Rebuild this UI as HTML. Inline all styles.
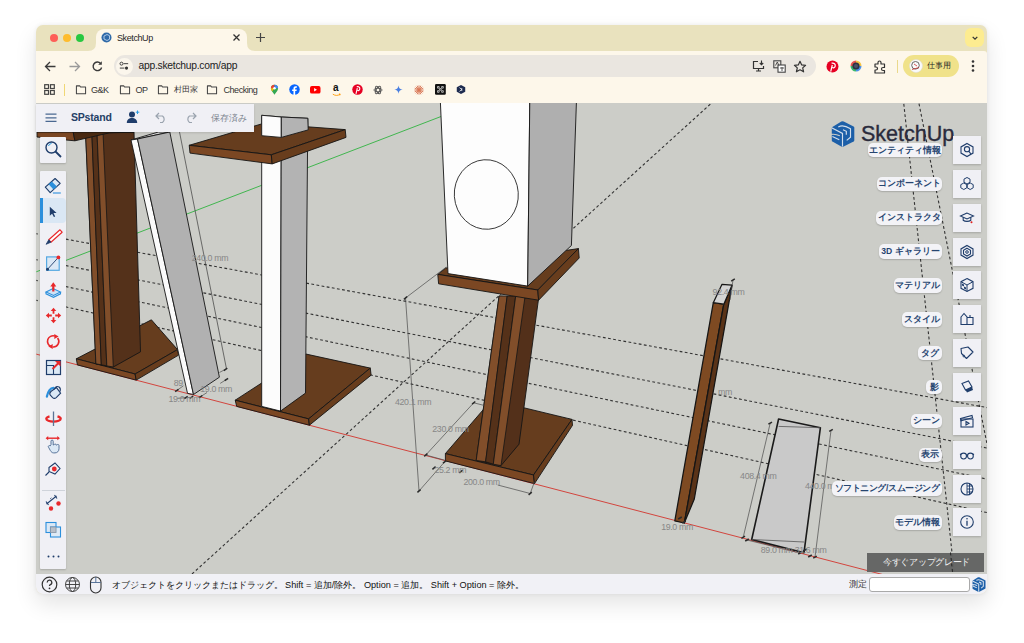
<!DOCTYPE html>
<html><head><meta charset="utf-8">
<style>
*{margin:0;padding:0;box-sizing:border-box}
html,body{width:1024px;height:643px;overflow:hidden;background:#fff;font-family:"Liberation Sans",sans-serif}
.a{position:absolute}
.t{position:absolute;white-space:nowrap;line-height:1}
#win{left:36.3px;top:25px;width:950.7px;height:569px;border-radius:7px;background:#e9e2be;box-shadow:0 10px 22px rgba(0,0,0,0.11),0 0 4px rgba(0,0,0,0.07)}
#tab{left:96px;top:29px;width:151px;height:23px;background:#fdf7ea;border-radius:8px 8px 0 0}
#toolbar{left:36.3px;top:51px;width:950.7px;height:52px;background:#fdf7ea;border-radius:0 3px 0 0}
#addr{left:114px;top:55px;width:702px;height:22px;background:#eae6e0;border-radius:11px}
#chip{left:903px;top:55px;width:56px;height:22px;background:#f0e28a;border-radius:11px}
#vp{left:36.3px;top:103px;width:950.7px;height:471px;background:#cccdc8;overflow:hidden}
#status{left:36.3px;top:574px;width:950.7px;height:20px;background:#f1f1f6;border-radius:0 0 7px 7px}
.dot{width:8px;height:8px;border-radius:50%;top:34px}
</style></head><body>
<div id="win" class="a"></div>
<!-- traffic lights -->
<div class="a dot" style="left:50px;background:#fe5f57"></div>
<div class="a dot" style="left:63px;background:#febc2e"></div>
<div class="a dot" style="left:76px;background:#28c840"></div>
<div id="tab" class="a"></div>
<!-- tab flares -->
<svg class="a" style="left:88px;top:43px" width="8" height="8"><path d="M0 8 Q8 8 8 0 L8 8Z" fill="#fdf7ea"/></svg>
<svg class="a" style="left:247px;top:43px" width="8" height="8"><path d="M8 8 Q0 8 0 0 L0 8Z" fill="#fdf7ea"/></svg>
<!-- favicon -->
<svg class="a" style="left:101px;top:32px" width="11" height="11" viewBox="0 0 11 11"><circle cx="5.5" cy="5.5" r="5" fill="#2f6aa8"/><path d="M3 4l3-1.5 2.5 1.2v3.5L6 8.5 3 7z" fill="none" stroke="#bcd3ec" stroke-width="0.9"/></svg>
<div class="t" style="left:117px;top:33.5px;font-size:9px;letter-spacing:-0.4px;color:#262626">SketchUp</div>
<svg class="a" style="left:232px;top:33px" width="9" height="9" viewBox="0 0 9 9"><path d="M1.5 1.5l6 6M7.5 1.5l-6 6" stroke="#333" stroke-width="1.3"/></svg>
<svg class="a" style="left:255px;top:32px" width="11" height="11" viewBox="0 0 11 11"><path d="M5.5 1v9M1 5.5h9" stroke="#444" stroke-width="1.2"/></svg>
<!-- dropdown -->
<div class="a" style="left:965px;top:28px;width:19px;height:19px;background:#fdec90;border-radius:6px"></div>
<svg class="a" style="left:970.5px;top:34.5px" width="8" height="6" viewBox="0 0 9 7"><path d="M1.8 2.2l2.7 2.7 2.7-2.7" fill="none" stroke="#333" stroke-width="1.5"/></svg>
<div id="toolbar" class="a"></div>
<!-- nav -->
<svg class="a" style="left:44px;top:60px" width="13" height="13" viewBox="0 0 13 13"><path d="M11.5 6.5h-10M6 2L1.5 6.5 6 11" fill="none" stroke="#3a3a3a" stroke-width="1.3"/></svg>
<svg class="a" style="left:67.5px;top:60px" width="13" height="13" viewBox="0 0 13 13"><path d="M1.5 6.5h10M7 2l4.5 4.5L7 11" fill="none" stroke="#9a9a9a" stroke-width="1.3"/></svg>
<svg class="a" style="left:91px;top:60px" width="13" height="13" viewBox="0 0 13 13"><path d="M10.6 7.5A4.3 4.3 0 1 1 9.6 3.4" fill="none" stroke="#3a3a3a" stroke-width="1.4"/><path d="M10.8 1.2v3.6H7.2z" fill="#3a3a3a"/></svg>
<div id="addr" class="a"></div>
<div class="a" style="left:115.8px;top:57.5px;width:17px;height:17px;border-radius:8.5px;background:#fbf6ec"></div>
<svg class="a" style="left:119.3px;top:61px" width="10" height="10" viewBox="0 0 12 12"><circle cx="3" cy="3.2" r="1.8" fill="none" stroke="#333" stroke-width="1.1"/><path d="M5.5 3.2h5.5M1 8.5h5.5" stroke="#333" stroke-width="1.1"/><circle cx="9" cy="8.5" r="1.9" fill="#333"/></svg>
<div class="t" style="left:138.5px;top:61px;font-size:10.3px;letter-spacing:-0.25px;color:#222">app.sketchup.com/app</div>
<!-- address right icons -->
<svg class="a" style="left:752px;top:60px" width="13" height="12" viewBox="0 0 13 12"><path d="M6 1.5H1.5v7h10V6" fill="none" stroke="#333" stroke-width="1.2"/><path d="M4 11h5M6.5 8.5V11" stroke="#333" stroke-width="1.2"/><path d="M9.5 0.5v4M7.8 3l1.7 1.8L11.2 3" fill="none" stroke="#333" stroke-width="1.1"/></svg>
<svg class="a" style="left:773px;top:60px" width="13" height="13" viewBox="0 0 13 13"><rect x="0.8" y="0.8" width="7" height="7" fill="none" stroke="#444" stroke-width="1.1"/><rect x="5" y="5" width="7.2" height="7.2" fill="#fff" stroke="#444" stroke-width="1.1"/><path d="M2.5 5.5l1.8-3.5 1.6 3.5M7 8h4M9 7v4" fill="none" stroke="#444" stroke-width="0.9"/></svg>
<svg class="a" style="left:793px;top:59.5px" width="14" height="14" viewBox="0 0 14 14"><path d="M7 1.3l1.7 3.6 3.9.4-2.9 2.6.9 3.9L7 9.8l-3.6 2 .9-3.9L1.4 5.3l3.9-.4z" fill="none" stroke="#333" stroke-width="1.2" stroke-linejoin="round"/></svg>
<!-- extensions -->
<svg class="a" style="left:826px;top:60px" width="13" height="13" viewBox="0 0 13 13"><circle cx="6.5" cy="6.5" r="6" fill="#e60023"/><path d="M5.6 3.2c2.6-.6 4 1 3.6 2.9-.3 1.6-2 2.1-2.7 1.3M6.3 5l-1.6 6.6" fill="none" stroke="#fff" stroke-width="1.2"/></svg>
<svg class="a" style="left:850px;top:60px" width="12" height="12" viewBox="0 0 12 12"><path d="M6 0.5A5.5 5.5 0 0 1 11.5 6H6z" fill="#f6c343"/><path d="M11.5 6A5.5 5.5 0 0 1 6 11.5V6z" fill="#4a8fe7"/><path d="M6 11.5A5.5 5.5 0 0 1 0.5 6H6z" fill="#3bb86b"/><path d="M0.5 6A5.5 5.5 0 0 1 6 0.5V6z" fill="#e8554e"/><circle cx="6" cy="6" r="3.6" fill="#2d3142"/><circle cx="6" cy="6" r="2" fill="#4b5066"/></svg>
<svg class="a" style="left:873px;top:59.5px" width="14" height="14" viewBox="0 0 14 14"><path d="M2 4h3V2.5a1.5 1.5 0 0 1 3 0V4h3.5v3.5H10a1.5 1.5 0 0 0 0 3h1.5V13H2v-3h1a1.5 1.5 0 0 0 0-3H2z" fill="none" stroke="#333" stroke-width="1.2" stroke-linejoin="round"/></svg>
<div class="a" style="left:896.5px;top:60px;width:1.5px;height:13px;background:#ead98c"></div>
<div id="chip" class="a"></div>
<svg class="a" style="left:909px;top:59px" width="14" height="14" viewBox="0 0 14 14"><circle cx="7" cy="7" r="6.5" fill="#fafafa" stroke="#ddd" stroke-width="0.5"/><circle cx="6.5" cy="6.3" r="3.8" fill="none" stroke="#666" stroke-width="1"/><path d="M3 10.5l7-2M5 5l3 2" stroke="#c33" stroke-width="0.8"/></svg>
<div class="t" style="left:927px;top:61.5px;font-size:8px;color:#222">仕事用</div>
<svg class="a" style="left:970px;top:59px" width="6" height="14" viewBox="0 0 6 14"><circle cx="3" cy="2.5" r="1.3" fill="#333"/><circle cx="3" cy="7" r="1.3" fill="#333"/><circle cx="3" cy="11.5" r="1.3" fill="#333"/></svg>
<!-- bookmarks -->
<svg class="a" style="left:44px;top:84px" width="11" height="11" viewBox="0 0 11 11"><g fill="none" stroke="#444" stroke-width="1.2"><rect x="0.7" y="0.7" width="3.8" height="3.8"/><rect x="6.5" y="0.7" width="3.8" height="3.8"/><rect x="0.7" y="6.5" width="3.8" height="3.8"/><rect x="6.5" y="6.5" width="3.8" height="3.8"/></g></svg>
<div class="a" style="left:63.5px;top:84px;width:1.5px;height:12px;background:#f0d774"></div>
<svg class="a" style="left:75px;top:85px" width="12" height="9.5" viewBox="0 0 12 11"><path d="M0.7 1h3.8l1 1.3h5.8v7.8H0.7z" fill="none" stroke="#444" stroke-width="1.2" stroke-linejoin="round"/></svg>
<div class="t" style="left:91px;top:86px;font-size:9px;letter-spacing:-0.5px;color:#333">G&amp;K</div>
<svg class="a" style="left:119px;top:85px" width="12" height="9.5" viewBox="0 0 12 11"><path d="M0.7 1h3.8l1 1.3h5.8v7.8H0.7z" fill="none" stroke="#444" stroke-width="1.2" stroke-linejoin="round"/></svg>
<div class="t" style="left:135.5px;top:86px;font-size:9px;letter-spacing:-0.6px;color:#333">OP</div>
<svg class="a" style="left:157px;top:85px" width="12" height="9.5" viewBox="0 0 12 11"><path d="M0.7 1h3.8l1 1.3h5.8v7.8H0.7z" fill="none" stroke="#444" stroke-width="1.2" stroke-linejoin="round"/></svg>
<div class="t" style="left:174px;top:86px;font-size:7.5px;color:#333">村田家</div>
<svg class="a" style="left:206px;top:85px" width="12" height="9.5" viewBox="0 0 12 11"><path d="M0.7 1h3.8l1 1.3h5.8v7.8H0.7z" fill="none" stroke="#444" stroke-width="1.2" stroke-linejoin="round"/></svg>
<div class="t" style="left:223.5px;top:86px;font-size:9px;letter-spacing:-0.45px;color:#333">Checking</div>
<!-- bookmark icons -->
<svg class="a" style="left:269.5px;top:84px" width="9" height="11.5" viewBox="0 0 12 14"><path d="M6 13.5C4 10.5 1.2 8 1.2 5a4.8 4.8 0 0 1 9.6 0c0 3-2.8 5.5-4.8 8.5z" fill="#34a853"/><path d="M1.2 5a4.8 4.8 0 0 1 4.8-4.8V5z" fill="#ea4335"/><path d="M6 0.2A4.8 4.8 0 0 1 10.8 5H6z" fill="#4285f4"/><path d="M1.2 5H6l-3 4C2 7.8 1.2 6.5 1.2 5z" fill="#fbbc04"/><circle cx="6" cy="5" r="1.7" fill="#fff"/></svg>
<svg class="a" style="left:289.3px;top:84.3px" width="11" height="11" viewBox="0 0 13 13"><circle cx="6.5" cy="6.5" r="6.2" fill="#0866ff"/><path d="M7.3 13V8.3h1.6l.3-1.9H7.3V5.3c0-.6.3-1 1-1h1V2.7c-.4 0-1-.1-1.5-.1-1.5 0-2.5.9-2.5 2.5v1.3H3.7v1.9h1.6V13" fill="#fff"/></svg>
<svg class="a" style="left:310.2px;top:86px" width="10.5" height="7.5" viewBox="0 0 14 10"><rect x="0" y="0" width="14" height="10" rx="2.5" fill="#ff0000"/><path d="M5.5 2.8v4.4L9.3 5z" fill="#fff"/></svg>
<div class="t" style="left:333px;top:82.5px;font-size:10px;font-weight:bold;color:#111">a</div>
<svg class="a" style="left:332px;top:92.5px" width="9" height="4" viewBox="0 0 11 4"><path d="M1 1c3 2 6 2 9 0M8.5 0.5l1.5.5-.5 1.5" fill="none" stroke="#f90" stroke-width="1.1"/></svg>
<svg class="a" style="left:351.5px;top:84.3px" width="11" height="11" viewBox="0 0 13 13"><circle cx="6.5" cy="6.5" r="6.2" fill="#e60023"/><path d="M5.6 3.2c2.6-.6 4 1 3.6 2.9-.3 1.6-2 2.1-2.7 1.3M6.3 5l-1.6 6.6" fill="none" stroke="#fff" stroke-width="1.3"/></svg>
<svg class="a" style="left:373px;top:84.8px" width="10" height="10" viewBox="0 0 12 12"><g fill="none" stroke="#555" stroke-width="1.1"><ellipse cx="6" cy="6" rx="5" ry="2.2"/><ellipse cx="6" cy="6" rx="5" ry="2.2" transform="rotate(60 6 6)"/><ellipse cx="6" cy="6" rx="5" ry="2.2" transform="rotate(120 6 6)"/></g></svg>
<svg class="a" style="left:394.1px;top:85.3px" width="9" height="9" viewBox="0 0 12 12"><path d="M6 0.5C6.5 4 8 5.5 11.5 6 8 6.5 6.5 8 6 11.5 5.5 8 4 6.5 0.5 6 4 5.5 5.5 4 6 0.5z" fill="#4a7fe0"/></svg>
<svg class="a" style="left:414.4px;top:84.8px" width="10" height="10" viewBox="0 0 13 13"><g stroke="#d97757" stroke-width="1.2" stroke-linecap="round"><path d="M6.5 1v11M1 6.5h11M2.6 2.6l7.8 7.8M10.4 2.6l-7.8 7.8M4.3 1.4l4.4 10.2M8.7 1.4L4.3 11.6M1.4 4.3l10.2 4.4M11.6 4.3L1.4 8.7"/></g></svg>
<svg class="a" style="left:435px;top:84.4px" width="10.8" height="10.8" viewBox="0 0 13 13"><rect width="13" height="13" rx="1.5" fill="#111"/><g fill="none" stroke="#ddd" stroke-width="0.9"><path d="M3 3h2v2H3zM8 3h2v2H8zM3 8h2v2H3zM8 8h2v2H8zM5.5 5.5h2v2h-2z"/></g></svg>
<svg class="a" style="left:456.3px;top:84.3px" width="10" height="11" viewBox="0 0 13 13"><path d="M6.5 0.5l5.5 3v6l-5.5 3-5.5-3v-6z" fill="#1d2b4f"/><path d="M4.5 4l3 2.5-3 2.5M7.5 4.5v4" fill="none" stroke="#fff" stroke-width="1"/></svg>
<div id="vp" class="a"></div>
<div id="status" class="a"></div>

<!-- SCENE -->
<svg id="scene" class="a" style="left:0;top:0" width="1024" height="643" viewBox="0 0 1024 643">
<defs><clipPath id="vpc"><rect x="36.3" y="103" width="950.7" height="471"/></clipPath></defs>
<g clip-path="url(#vpc)">
<rect x="36" y="103" width="951" height="471" fill="#cccdc8"/>
<line x1="30.0" y1="232.6" x2="987.0" y2="407.6" stroke="#333" stroke-width="1.10" stroke-dasharray="2.8 2.4"/>
<line x1="30.0" y1="258.5" x2="987.0" y2="448.0" stroke="#333" stroke-width="1.10" stroke-dasharray="2.8 2.4"/>
<line x1="30.0" y1="279.1" x2="987.0" y2="479.1" stroke="#333" stroke-width="1.10" stroke-dasharray="2.8 2.4"/>
<line x1="30.0" y1="298.9" x2="987.0" y2="512.6" stroke="#333" stroke-width="1.10" stroke-dasharray="2.8 2.4"/>
<line x1="192.0" y1="574.0" x2="710.6" y2="103.9" stroke="#333" stroke-width="1.10" stroke-dasharray="2.8 2.4"/>
<line x1="903.8" y1="103.9" x2="954.3" y2="574.0" stroke="#333" stroke-width="1.10" stroke-dasharray="2.8 2.4"/>
<line x1="919.0" y1="103.7" x2="1013.0" y2="574.0" stroke="#333" stroke-width="1.10" stroke-dasharray="2.8 2.4"/>
<line x1="30.0" y1="352.5" x2="987.0" y2="601.7" stroke="#d2453e" stroke-width="1.00" />
<line x1="30.0" y1="274.2" x2="441.0" y2="116.5" stroke="#41b64f" stroke-width="1.00" />
<polygon points="76.3,358.8 151.4,319.8 177.5,349.6 135.1,374.0" fill="#663d1e" stroke="#151515" stroke-width="0.90" stroke-linejoin="round" />
<polygon points="76.3,358.8 135.1,374.0 136.2,380.1 77.4,364.9" fill="#7b4723" stroke="#151515" stroke-width="0.90" stroke-linejoin="round" />
<polygon points="135.1,374.0 177.5,349.6 178.6,355.1 136.2,380.1" fill="#683d1d" stroke="#151515" stroke-width="0.90" stroke-linejoin="round" />
<polygon points="85.5,132.0 134.0,132.0 140.5,351.8 113.3,367.0 95.9,363.8" fill="#54311a" stroke="#151515" stroke-width="0.90" stroke-linejoin="round" />
<polygon points="85.5,132.0 91.8,132.0 101.3,364.8 95.9,363.8" fill="#814e2a" stroke="#151515" stroke-width="0.80" stroke-linejoin="round" />
<polygon points="91.8,132.0 97.0,132.0 106.8,365.9 101.3,364.8" fill="#553119" stroke="#151515" stroke-width="0.80" stroke-linejoin="round" />
<polygon points="97.0,132.0 103.0,132.0 113.3,367.0 106.8,365.9" fill="#814e2a" stroke="#151515" stroke-width="0.80" stroke-linejoin="round" />
<polygon points="37.0,132.0 73.2,132.0 74.9,140.8 66.2,140.0 37.0,137.0" fill="#7b4723" stroke="#151515" stroke-width="0.90" stroke-linejoin="round" />
<polygon points="73.2,132.0 134.0,132.0 109.2,132.9 74.9,140.8" fill="#4a2a12" stroke="#151515" stroke-width="0.90" stroke-linejoin="round" />
<polygon points="131.0,140.0 158.4,132.0 169.8,132.0 137.5,139.0" fill="#d9d9d9" stroke="#151515" stroke-width="0.90" stroke-linejoin="round" />
<polygon points="131.0,140.0 137.5,139.0 193.5,394.5 187.5,393.3" fill="#fbfbfb" stroke="#151515" stroke-width="0.90" stroke-linejoin="round" />
<polygon points="137.5,139.0 169.8,132.0 219.4,377.2 193.5,394.5" fill="#b1b1b1" stroke="#151515" stroke-width="0.90" stroke-linejoin="round" />
<line x1="179.5" y1="132.0" x2="226.5" y2="369.0" stroke="#3c3c3c" stroke-width="0.70" />
<polygon points="235.2,400.2 306.2,354.1 370.3,368.1 308.6,418.9" fill="#663d1e" stroke="#151515" stroke-width="0.90" stroke-linejoin="round" />
<polygon points="235.2,400.2 308.6,418.9 309.4,425.2 236.7,406.4" fill="#7b4723" stroke="#151515" stroke-width="0.90" stroke-linejoin="round" />
<polygon points="308.6,418.9 370.3,368.1 371.1,375.2 309.4,425.2" fill="#683d1d" stroke="#151515" stroke-width="0.90" stroke-linejoin="round" />
<polygon points="261.7,115.3 281.3,117.0 280.5,411.1 261.7,406.4" fill="#fcfcfc" stroke="#151515" stroke-width="0.90" stroke-linejoin="round" />
<polygon points="281.3,117.0 307.8,118.3 305.5,393.1 280.5,411.1" fill="#b3b3b3" stroke="#151515" stroke-width="0.90" stroke-linejoin="round" />
<polygon points="189.2,145.3 263.0,123.5 345.2,129.6 271.3,154.8" fill="#663d1e" stroke="#151515" stroke-width="0.90" stroke-linejoin="round" />
<polygon points="189.2,145.3 271.3,154.8 272.2,163.9 190.0,153.1" fill="#7b4723" stroke="#151515" stroke-width="0.90" stroke-linejoin="round" />
<polygon points="271.3,154.8 345.2,129.6 346.0,137.4 272.2,163.9" fill="#683d1d" stroke="#151515" stroke-width="0.90" stroke-linejoin="round" />
<polygon points="261.7,115.3 281.3,117.0 281.3,137.4 261.7,135.7" fill="#fcfcfc" stroke="#151515" stroke-width="0.90" stroke-linejoin="round" />
<polygon points="281.3,117.0 307.8,118.3 308.2,129.9 281.3,137.4" fill="#b3b3b3" stroke="#151515" stroke-width="0.90" stroke-linejoin="round" />
<polygon points="445.4,453.6 491.6,400.0 572.0,419.4 533.5,475.0" fill="#663d1e" stroke="#151515" stroke-width="0.90" stroke-linejoin="round" />
<polygon points="445.4,453.6 533.5,475.0 534.5,483.6 445.4,460.9" fill="#7b4723" stroke="#151515" stroke-width="0.90" stroke-linejoin="round" />
<polygon points="533.5,475.0 572.0,419.4 572.5,425.3 534.5,483.6" fill="#683d1d" stroke="#151515" stroke-width="0.90" stroke-linejoin="round" />
<polygon points="499.1,296.0 538.5,299.0 519.0,444.2 501.0,465.6 476.2,460.4" fill="#53301a" stroke="#151515" stroke-width="0.90" stroke-linejoin="round" />
<polygon points="499.1,296.0 507.2,296.0 485.6,461.8 476.2,460.4" fill="#814e2a" stroke="#151515" stroke-width="0.80" stroke-linejoin="round" />
<polygon points="507.2,296.0 515.7,296.0 493.3,464.2 485.6,461.8" fill="#553119" stroke="#151515" stroke-width="0.80" stroke-linejoin="round" />
<polygon points="515.7,296.0 525.1,296.0 501.0,465.6 493.3,464.2" fill="#814e2a" stroke="#151515" stroke-width="0.80" stroke-linejoin="round" />
<polygon points="437.8,274.4 445.6,268.1 578.4,248.6 537.8,290.0" fill="#663d1e" stroke="#151515" stroke-width="0.90" stroke-linejoin="round" />
<polygon points="437.8,274.4 537.8,290.0 538.6,300.2 438.6,283.8" fill="#7b4723" stroke="#151515" stroke-width="0.90" stroke-linejoin="round" />
<polygon points="537.8,290.0 578.4,248.6 579.2,258.0 538.6,300.2" fill="#683d1d" stroke="#151515" stroke-width="0.90" stroke-linejoin="round" />
<polygon points="440.3,100.0 529.8,100.0 527.7,286.1 448.0,273.6" fill="#fdfdfd" stroke="#151515" stroke-width="0.90" stroke-linejoin="round" />
<polygon points="529.8,100.0 576.5,100.0 571.4,245.5 527.7,286.1" fill="#afafaf" stroke="#151515" stroke-width="0.90" stroke-linejoin="round" />
<ellipse cx="486.3" cy="194.5" rx="32" ry="34.8" fill="none" stroke="#2a2a2a" stroke-width="0.9" transform="rotate(-4 486.3 194.5)"/>
<polygon points="713.3,302.7 723.8,304.2 684.3,523.0 674.8,520.9" fill="#7e4a22" stroke="#151515" stroke-width="1.25" stroke-linejoin="round" />
<polygon points="723.8,304.2 732.0,285.2 694.3,499.0 684.3,523.0" fill="#5a3318" stroke="#151515" stroke-width="1.25" stroke-linejoin="round" />
<polygon points="713.3,302.7 721.9,284.4 732.0,285.2 723.8,304.2" fill="#d4d4d4" stroke="#151515" stroke-width="1.25" stroke-linejoin="round" />
<polygon points="778.6,419.0 820.4,427.7 804.0,552.7 751.7,539.5" fill="#c9c9c9" stroke="#1a1a1a" stroke-width="1.60" stroke-linejoin="round" />
<line x1="778.6" y1="426.4" x2="820.4" y2="427.7" stroke="#555" stroke-width="0.80" />
<line x1="751.7" y1="539.5" x2="804.0" y2="542.0" stroke="#555" stroke-width="0.80" />
<line x1="405.5" y1="298.0" x2="419.0" y2="491.0" stroke="#4a4a4a" stroke-width="0.70" />
<line x1="405.5" y1="298.0" x2="446.4" y2="267.0" stroke="#4a4a4a" stroke-width="0.70" />
<line x1="473.7" y1="402.8" x2="425.8" y2="455.0" stroke="#4a4a4a" stroke-width="0.70" />
<line x1="473.7" y1="402.8" x2="484.0" y2="405.4" stroke="#4a4a4a" stroke-width="0.70" />
<line x1="425.8" y1="455.0" x2="444.6" y2="460.2" stroke="#4a4a4a" stroke-width="0.70" />
<line x1="419.0" y1="491.0" x2="444.6" y2="461.9" stroke="#4a4a4a" stroke-width="0.70" />
<line x1="497.7" y1="485.0" x2="530.2" y2="493.5" stroke="#4a4a4a" stroke-width="0.70" />
<line x1="530.2" y1="493.5" x2="534.4" y2="482.0" stroke="#4a4a4a" stroke-width="0.70" />
<line x1="770.2" y1="423.2" x2="743.2" y2="537.3" stroke="#4a4a4a" stroke-width="0.70" />
<line x1="831.0" y1="430.4" x2="815.0" y2="557.2" stroke="#4a4a4a" stroke-width="0.70" />
<line x1="747.0" y1="540.0" x2="800.0" y2="553.0" stroke="#4a4a4a" stroke-width="0.70" />
<line x1="733.0" y1="280.0" x2="730.0" y2="300.0" stroke="#4a4a4a" stroke-width="0.70" />
<line x1="176.8" y1="390.5" x2="183.4" y2="385.8" stroke="#4a4a4a" stroke-width="0.70" />
<line x1="219.4" y1="372.5" x2="226.4" y2="368.8" stroke="#4a4a4a" stroke-width="0.70" />
<line x1="220.2" y1="383.4" x2="226.4" y2="379.5" stroke="#4a4a4a" stroke-width="0.70" />
<line x1="177.2" y1="398.3" x2="192.0" y2="397.3" stroke="#4a4a4a" stroke-width="0.70" />
<line x1="200.6" y1="396.7" x2="207.0" y2="392.5" stroke="#4a4a4a" stroke-width="0.70" />
<line x1="175.1" y1="391.7" x2="178.5" y2="389.3" stroke="#2a2a2a" stroke-width="1.50" />
<line x1="198.9" y1="397.9" x2="202.3" y2="395.5" stroke="#2a2a2a" stroke-width="1.50" />
<line x1="223.9" y1="370.6" x2="227.3" y2="368.2" stroke="#2a2a2a" stroke-width="1.50" />
<line x1="224.7" y1="380.7" x2="228.1" y2="378.3" stroke="#2a2a2a" stroke-width="1.50" />
<line x1="184.3" y1="398.7" x2="187.7" y2="396.3" stroke="#2a2a2a" stroke-width="1.50" />
<line x1="189.8" y1="398.5" x2="193.2" y2="396.1" stroke="#2a2a2a" stroke-width="1.50" />
<line x1="403.9" y1="299.3" x2="407.1" y2="296.7" stroke="#2a2a2a" stroke-width="1.50" />
<line x1="472.1" y1="404.1" x2="475.3" y2="401.5" stroke="#2a2a2a" stroke-width="1.50" />
<line x1="424.2" y1="456.3" x2="427.4" y2="453.7" stroke="#2a2a2a" stroke-width="1.50" />
<line x1="417.4" y1="492.3" x2="420.6" y2="489.7" stroke="#2a2a2a" stroke-width="1.50" />
<line x1="443.0" y1="463.2" x2="446.2" y2="460.6" stroke="#2a2a2a" stroke-width="1.50" />
<line x1="528.6" y1="494.8" x2="531.8" y2="492.2" stroke="#2a2a2a" stroke-width="1.50" />
<line x1="432.4" y1="469.3" x2="435.6" y2="466.7" stroke="#2a2a2a" stroke-width="1.50" />
<line x1="459.4" y1="472.8" x2="462.6" y2="470.2" stroke="#2a2a2a" stroke-width="1.50" />
<line x1="768.4" y1="424.2" x2="772.0" y2="422.1" stroke="#2a2a2a" stroke-width="1.50" />
<line x1="741.4" y1="538.3" x2="745.0" y2="536.2" stroke="#2a2a2a" stroke-width="1.50" />
<line x1="829.2" y1="431.4" x2="832.8" y2="429.3" stroke="#2a2a2a" stroke-width="1.50" />
<line x1="813.2" y1="558.2" x2="816.8" y2="556.2" stroke="#2a2a2a" stroke-width="1.50" />
<line x1="745.2" y1="541.0" x2="748.8" y2="539.0" stroke="#2a2a2a" stroke-width="1.50" />
<line x1="798.2" y1="554.0" x2="801.8" y2="552.0" stroke="#2a2a2a" stroke-width="1.50" />
<line x1="803.2" y1="551.0" x2="806.8" y2="549.0" stroke="#2a2a2a" stroke-width="1.50" />
<line x1="808.2" y1="557.0" x2="811.8" y2="555.0" stroke="#2a2a2a" stroke-width="1.50" />
<line x1="731.2" y1="281.1" x2="734.8" y2="278.9" stroke="#2a2a2a" stroke-width="1.50" />
<line x1="678.2" y1="519.0" x2="681.8" y2="517.0" stroke="#2a2a2a" stroke-width="1.50" />
<line x1="682.2" y1="523.0" x2="685.8" y2="521.0" stroke="#2a2a2a" stroke-width="1.50" />
<text x="191.8" y="261.0" font-family="Liberation Sans, sans-serif" font-size="8.8" fill="#878787" letter-spacing="-0.35">240.0 mm</text>
<text x="173.8" y="386.0" font-family="Liberation Sans, sans-serif" font-size="8.8" fill="#878787" letter-spacing="-0.35">89</text>
<text x="168.5" y="401.7" font-family="Liberation Sans, sans-serif" font-size="8.8" fill="#878787" letter-spacing="-0.35">19.0 mm</text>
<text x="200.3" y="392.0" font-family="Liberation Sans, sans-serif" font-size="8.8" fill="#878787" letter-spacing="-0.35">19.0 mm</text>
<text x="395.0" y="405.0" font-family="Liberation Sans, sans-serif" font-size="8.8" fill="#878787" letter-spacing="-0.35">420.1 mm</text>
<text x="432.3" y="432.0" font-family="Liberation Sans, sans-serif" font-size="8.8" fill="#878787" letter-spacing="-0.35">230.0 mm</text>
<text x="434.4" y="472.6" font-family="Liberation Sans, sans-serif" font-size="8.8" fill="#878787" letter-spacing="-0.35">25.2 mm</text>
<text x="463.5" y="485.4" font-family="Liberation Sans, sans-serif" font-size="8.8" fill="#878787" letter-spacing="-0.35">200.0 mm</text>
<text x="712.6" y="295.2" font-family="Liberation Sans, sans-serif" font-size="8.8" fill="#878787" letter-spacing="-0.35">92.4 mm</text>
<text x="718.0" y="395.4" font-family="Liberation Sans, sans-serif" font-size="8.8" fill="#878787" letter-spacing="-0.35">mm</text>
<text x="661.2" y="530.1" font-family="Liberation Sans, sans-serif" font-size="8.8" fill="#878787" letter-spacing="-0.35">19.0 mm</text>
<text x="740.1" y="479.0" font-family="Liberation Sans, sans-serif" font-size="8.8" fill="#878787" letter-spacing="-0.35">408.4 mm</text>
<text x="805.0" y="489.4" font-family="Liberation Sans, sans-serif" font-size="8.8" fill="#878787" letter-spacing="-0.35">440.0 mm</text>
<text x="760.8" y="552.9" font-family="Liberation Sans, sans-serif" font-size="8.8" fill="#878787" letter-spacing="-0.35">89.0 mm 31.6 mm</text>
</g>
</svg>
<!-- header panel -->
<div class="a" style="left:36.3px;top:103.5px;width:217.7px;height:28px;background:#f0f0f5;box-shadow:0 1px 2px rgba(0,0,0,0.12)"></div>
<svg class="a" style="left:45px;top:113px" width="12" height="10" viewBox="0 0 12 10"><path d="M0.5 1.2h11M0.5 4.8h11M0.5 8.4h11" stroke="#4a6891" stroke-width="1.2"/></svg>
<div class="t" style="left:71px;top:112px;font-size:10.5px;font-weight:bold;color:#253f66;letter-spacing:-0.2px">SPstand</div>
<svg class="a" style="left:126px;top:110px" width="14" height="14" viewBox="0 0 14 14"><circle cx="6" cy="4.5" r="3" fill="#1f3d6b"/><path d="M0.8 13c0-3.2 2.2-5 5.2-5s5.2 1.8 5.2 5z" fill="#1f3d6b"/><path d="M11.5 0.5v3.5M9.8 2.2h3.5" stroke="#2a9be0" stroke-width="1"/></svg>
<svg class="a" style="left:155px;top:112px" width="13" height="11" viewBox="0 0 13 11"><path d="M4 1L1 4l3 3M1 4h6.5a4 4 0 0 1 0 6.5H5" fill="none" stroke="#9aa3ae" stroke-width="1.2"/></svg>
<svg class="a" style="left:184px;top:112px" width="13" height="11" viewBox="0 0 13 11"><path d="M9 1l3 3-3 3M12 4H5.5a4 4 0 0 0 0 6.5H8" fill="none" stroke="#9aa3ae" stroke-width="1.2"/></svg>
<div class="t" style="left:210.5px;top:113.5px;font-size:9px;color:#7d8590">保存済み</div>
<!-- left toolbar -->
<div class="a" style="left:40.3px;top:137px;width:26.2px;height:25.5px;background:#f0f0f5;border-radius:1px;box-shadow:0 1px 2px rgba(0,0,0,0.18)"></div>
<svg class="a" style="left:44px;top:140px" width="19" height="19" viewBox="0 0 19 19"><circle cx="7.5" cy="7.5" r="5.5" fill="none" stroke="#1f3d6b" stroke-width="1.4"/><path d="M4.5 6a3.3 3.3 0 0 1 3-2.5" fill="none" stroke="#2a9be0" stroke-width="1"/><path d="M11.5 11.5l5.5 5.5" stroke="#1f3d6b" stroke-width="1.8"/></svg>
<div class="a" style="left:40.3px;top:171px;width:26.2px;height:397.5px;background:#f0f0f5;border-radius:1px;box-shadow:0 1px 2px rgba(0,0,0,0.18)"></div>
<div class="a" style="left:40.3px;top:198px;width:26.2px;height:25px;background:#dae7f4;border-radius:0 4px 4px 0"></div>
<div class="a" style="left:40.3px;top:198px;width:2.6px;height:25px;background:#2b8fdc"></div>
<div class="a" style="left:42px;top:489.5px;width:23px;height:1px;background:#cfd3da"></div>
<svg class="a" style="left:44px;top:176.5px" width="19" height="19" viewBox="0 0 19 19"><path d="M1.3 10.2L11.1 1.5L16.2 6.4L6.2 15.6z" fill="#dbe8f5" stroke="#1f3d6b" stroke-width="1.1" stroke-linejoin="round"/><path d="M4.6 7.3L7.8 4.4L12.9 9.5L9.5 12.5z" fill="#2b8fdc"/><path d="M8.9 16h7.9" stroke="#2b8fdc" stroke-width="1.1"/></svg>
<svg class="a" style="left:44px;top:201.0px" width="19" height="19" viewBox="0 0 19 19"><path d="M5.8 5.8v9l2.3-2.1 1.8 3.4 1.3-.7-1.7-3.3h3.1z" fill="#1f3d6b"/></svg>
<svg class="a" style="left:44px;top:227.2px" width="19" height="19" viewBox="0 0 19 19"><path d="M6.9 15.2L18.1 5.2 16 2.8 4.8 12.8z" fill="#fff" stroke="#e8282b" stroke-width="1.2" stroke-linejoin="round"/><path d="M2.1 17.3L6.9 15.2 4.8 12.8z" fill="#1f3d6b" stroke="#1f3d6b" stroke-width="0.8" stroke-linejoin="round"/></svg>
<svg class="a" style="left:44px;top:253.5px" width="19" height="19" viewBox="0 0 19 19"><rect x="2.6" y="2.9" width="12.6" height="13.4" fill="#dbe8f5" stroke="#55a8e2" stroke-width="1.2"/><path d="M3.6 15.2L14.2 3.6" stroke="#1f3d6b" stroke-width="0.9"/><circle cx="14.4" cy="3.4" r="1.9" fill="#e8282b"/><circle cx="3.5" cy="15.3" r="1.5" fill="#1f3d6b"/></svg>
<svg class="a" style="left:44px;top:279.5px" width="19" height="19" viewBox="0 0 19 19"><path d="M2 12l7-3.5 7.5 3.5-7 3.5z" fill="#cfe2f5" stroke="#2b8fdc" stroke-width="1.1"/><path d="M2 12v1.8l7.5 3.5 7-3.5V12" fill="none" stroke="#2b8fdc" stroke-width="1.1"/><path d="M9.3 11.5V5.5" stroke="#e8282b" stroke-width="2.2"/><path d="M6.3 6.5l3-4.2 3 4.2z" fill="#e8282b"/></svg>
<svg class="a" style="left:44px;top:305.9px" width="19" height="19" viewBox="0 0 19 19"><g fill="#e8282b"><path d="M9.5 1.8l2.8 3.2H6.7z"/><path d="M9.5 17.2l2.8-3.2H6.7z"/><path d="M1.8 9.5l3.2-2.8v5.6z"/><path d="M17.2 9.5l-3.2-2.8v5.6z"/></g><path d="M9.5 4.5v3.3M9.5 11.2v3.3M4.5 9.5h3.3M11.2 9.5h3.3" stroke="#e8282b" stroke-width="1.8"/></svg>
<svg class="a" style="left:44px;top:332.1px" width="19" height="19" viewBox="0 0 19 19"><path d="M7.3 14.6A5.5 5.5 0 0 1 10.8 4.1M13.6 6A5.5 5.5 0 0 1 8.6 14.9" fill="none" stroke="#e8282b" stroke-width="1.6"/><path d="M14.6 4.6L10.3 1.9 10.3 7z" fill="#e8282b"/><path d="M4.4 14.4L8.7 12 8.7 17.1z" fill="#e8282b"/></svg>
<svg class="a" style="left:44px;top:357.5px" width="19" height="19" viewBox="0 0 19 19"><rect x="2.5" y="2.5" width="14" height="14" fill="#dbe8f5" stroke="#1f3d6b" stroke-width="1.2"/><path d="M2.5 7.5h7v9" fill="none" stroke="#1f3d6b" stroke-width="1.1"/><path d="M8.5 11l6-6" stroke="#e8282b" stroke-width="2"/><path d="M11 3h5.5v5.5z" fill="#e8282b"/></svg>
<svg class="a" style="left:44px;top:382.9px" width="19" height="19" viewBox="0 0 19 19"><path d="M9.5 4.8Q4.6 5.2 2.9 13.6" stroke="#2b8fdc" stroke-width="2.3" fill="none" stroke-linecap="round"/><path d="M7.2 8.3L12.5 4.6L16.6 10.2L12.2 14.6Q10.3 16.2 8.6 14.6L6.1 11.9Q5.1 10 7.2 8.3z" fill="#dbe8f5" stroke="#1f3d6b" stroke-width="1.1"/><path d="M10.3 6.4Q11.8 2.2 15.1 4Q17.2 5.6 15.9 8.6" fill="none" stroke="#1f3d6b" stroke-width="1.1"/></svg>
<svg class="a" style="left:44px;top:409.0px" width="19" height="19" viewBox="0 0 19 19"><path d="M9.5 12.6A7.2 2.9 0 0 1 2.3 9.7A7.2 2.9 0 0 1 5.5 7.3M13.5 7.3A7.2 2.9 0 0 1 16.7 9.7A7.2 2.9 0 0 1 9.5 12.6" fill="none" stroke="#e8282b" stroke-width="2.3"/><path d="M9.5 2.5v14.5" stroke="#5a7394" stroke-width="1.3"/></svg>
<svg class="a" style="left:44px;top:435.2px" width="19" height="19" viewBox="0 0 19 19"><path d="M7 9.5V6.2a1.1 1.1 0 0 1 2.2 0v3.8l.9-.3a1.1 1.1 0 0 1 2.1.4l.8-.2a1.1 1.1 0 0 1 2 .5v3.3c0 2.4-1.7 4.2-4 4.2H9.6c-1.4 0-2.3-.9-3.2-2.3L4.5 12.2a1 1 0 0 1 1.6-1.2z" fill="#dbe8f5" stroke="#4a6891" stroke-width="0.9"/><path d="M3 3.2h11.5" stroke="#e8282b" stroke-width="1.4"/><path d="M1.6 3.2l2.6-2.1v4.2zM15.9 3.2l-2.6-2.1v4.2z" fill="#e8282b"/></svg>
<svg class="a" style="left:44px;top:460.5px" width="19" height="19" viewBox="0 0 19 19"><path d="M5 6.5l6-4.5 5 5.5-5 5.5-6-2.5z" fill="none" stroke="#1f3d6b" stroke-width="1.1" transform="rotate(0)"/><circle cx="10.3" cy="8" r="2.4" fill="#e8282b"/><path d="M5 11l-3.5 3.5" stroke="#1f3d6b" stroke-width="1.1"/></svg>
<svg class="a" style="left:44px;top:493.2px" width="19" height="19" viewBox="0 0 19 19"><path d="M2.5 11l10-8" stroke="#1f3d6b" stroke-width="1.1"/><path d="M2 8.5l2.5 3.5M10.5 2l2.5 3.5" stroke="#1f3d6b" stroke-width="1.1"/><path d="M6 6l1.5-1.2" stroke="#1f3d6b" stroke-width="0.7"/><circle cx="14.5" cy="10.5" r="2.2" fill="#e8282b"/><circle cx="7" cy="15.5" r="2.2" fill="#e8282b"/></svg>
<svg class="a" style="left:44px;top:520.3px" width="19" height="19" viewBox="0 0 19 19"><rect x="2" y="2.5" width="10" height="10" fill="#dbe8f5" stroke="#2b8fdc" stroke-width="1.1"/><rect x="6.5" y="7" width="10" height="10" fill="#dbe8f5" fill-opacity="0.8" stroke="#2b8fdc" stroke-width="1.1"/><rect x="6.5" y="7" width="5.5" height="5.5" fill="#b9bfc8" stroke="#8a96a5" stroke-width="0.8"/></svg>
<svg class="a" style="left:44px;top:546.5px" width="19" height="19" viewBox="0 0 19 19"><g fill="#1f3d6b"><circle cx="4.5" cy="9.5" r="1"/><circle cx="9.5" cy="9.5" r="1"/><circle cx="14.5" cy="9.5" r="1"/></g></svg>
<!-- right panel -->
<svg class="a" style="left:831px;top:120.5px" width="24" height="26" viewBox="0 0 24 26"><path d="M10.3 0.6Q11.5 0 12.7 0.6L22.6 5.6Q23.3 6 23.3 6.8V19.2Q23.3 20 22.6 20.4L12.7 25.4Q11.5 26 10.3 25.4L1.4 20.6Q0.8 20.2 0.8 19.4V7.2Q0.8 6.4 1.4 6z" fill="#1c5fa8"/><g fill="none" stroke="#d3deeb" stroke-width="1.15" stroke-linecap="butt"><path d="M0.6 6.8L11.5 12.4V25.5"/><path d="M1.4 15.5L8.3 18.8"/><path d="M7.3 5.9Q12 3 19.5 7.8V16.2L15.7 19.4"/><path d="M12 8.7L15.3 10.3V13.8"/></g><path d="M0 13.4Q4.5 12.6 8.8 14.8" fill="none" stroke="#cccdc8" stroke-width="1.1"/></svg>
<div class="t" style="left:861px;top:123.5px;font-size:21.5px;color:#2a2b3c;letter-spacing:0px;-webkit-text-stroke:0.35px #2a2b3c">SketchUp</div>
<div class="a" style="left:953px;top:136.0px;width:28px;height:28px;background:#f0f0f5;box-shadow:0 1px 2px rgba(0,0,0,0.2)"></div>
<svg class="a" style="left:959px;top:142.0px" width="16" height="16" viewBox="0 0 16 16"><path d="M8 1.5l6 3.4v6.2L8 14.5 2 11.1V4.9z" fill="none" stroke="#1f3d6b" stroke-width="1.1"/><circle cx="8" cy="7.2" r="2.6" fill="none" stroke="#1f3d6b" stroke-width="1.1"/><path d="M9.8 9.2l2 2.6" stroke="#1f3d6b" stroke-width="1.1"/></svg>
<div class="a" style="left:868.0px;top:142.8px;width:74.0px;height:14.5px;background:#f3f3f7;border-radius:5px;box-shadow:0 1px 1.5px rgba(0,0,0,0.18)"></div>
<div class="t" style="left:868.0px;top:145.6px;width:74.0px;text-align:center;font-size:8.6px;font-weight:bold;color:#264570;letter-spacing:0">エンティティ情報</div>
<div class="a" style="left:953px;top:169.8px;width:28px;height:28px;background:#f0f0f5;box-shadow:0 1px 2px rgba(0,0,0,0.2)"></div>
<svg class="a" style="left:959px;top:175.8px" width="16" height="16" viewBox="0 0 16 16"><g fill="none" stroke="#1f3d6b" stroke-width="1"><path d="M8 1.5l3 1.6v3.2L8 8 5 6.3V3.1z"/><path d="M4.8 7l3 1.6v3.2L4.8 13.5l-3-1.7V8.6z"/><path d="M11.2 7l3 1.6v3.2l-3 1.7-3-1.7V8.6z"/></g></svg>
<div class="a" style="left:876.5px;top:176.7px;width:65.5px;height:14.5px;background:#f3f3f7;border-radius:5px;box-shadow:0 1px 1.5px rgba(0,0,0,0.18)"></div>
<div class="t" style="left:876.5px;top:179.4px;width:65.5px;text-align:center;font-size:8.6px;font-weight:bold;color:#264570;letter-spacing:0">コンポーネント</div>
<div class="a" style="left:953px;top:203.7px;width:28px;height:28px;background:#f0f0f5;box-shadow:0 1px 2px rgba(0,0,0,0.2)"></div>
<svg class="a" style="left:959px;top:209.7px" width="16" height="16" viewBox="0 0 16 16"><path d="M8 3L1.5 6 8 9l6.5-3z" fill="none" stroke="#1f3d6b" stroke-width="1.1"/><path d="M4.2 7.3v3c1.8 1.4 5.8 1.4 7.6 0v-3" fill="none" stroke="#1f3d6b" stroke-width="1.1"/><circle cx="12.5" cy="12.2" r="1" fill="#e02020"/></svg>
<div class="a" style="left:876.0px;top:210.5px;width:66.0px;height:14.5px;background:#f3f3f7;border-radius:5px;box-shadow:0 1px 1.5px rgba(0,0,0,0.18)"></div>
<div class="t" style="left:876.0px;top:213.3px;width:66.0px;text-align:center;font-size:8.6px;font-weight:bold;color:#264570;letter-spacing:0">インストラクタ</div>
<div class="a" style="left:953px;top:237.6px;width:28px;height:28px;background:#f0f0f5;box-shadow:0 1px 2px rgba(0,0,0,0.2)"></div>
<svg class="a" style="left:959px;top:243.6px" width="16" height="16" viewBox="0 0 16 16"><path d="M8 1.5l6 3.4v6.2L8 14.5 2 11.1V4.9z" fill="none" stroke="#1f3d6b" stroke-width="1.1"/><path d="M8 4.2l3.5 2v3.8L8 12 4.5 10V6.2z" fill="none" stroke="#1f3d6b" stroke-width="1.1"/><circle cx="8" cy="8" r="1.3" fill="none" stroke="#1f3d6b" stroke-width="1"/></svg>
<div class="a" style="left:878.7px;top:244.4px;width:63.3px;height:14.5px;background:#f3f3f7;border-radius:5px;box-shadow:0 1px 1.5px rgba(0,0,0,0.18)"></div>
<div class="t" style="left:878.7px;top:247.2px;width:63.3px;text-align:center;font-size:8.6px;font-weight:bold;color:#264570;letter-spacing:0">3D ギャラリー</div>
<div class="a" style="left:953px;top:271.4px;width:28px;height:28px;background:#f0f0f5;box-shadow:0 1px 2px rgba(0,0,0,0.2)"></div>
<svg class="a" style="left:959px;top:277.4px" width="16" height="16" viewBox="0 0 16 16"><path d="M8 1.5l6 3.2v6.6L8 14.5 2 11.3V4.7z" fill="none" stroke="#1f3d6b" stroke-width="1.1"/><path d="M2 4.7L8 8l6-3.3M8 8v6.5" fill="none" stroke="#1f3d6b" stroke-width="1"/><path d="M3 6.5l2 1v2l-2-1zM5 9.5l2 1v2l-2-1zM3.5 11l1.5.8" fill="#1f3d6b"/></svg>
<div class="a" style="left:893.5px;top:278.2px;width:48.5px;height:14.5px;background:#f3f3f7;border-radius:5px;box-shadow:0 1px 1.5px rgba(0,0,0,0.18)"></div>
<div class="t" style="left:893.5px;top:281.0px;width:48.5px;text-align:center;font-size:8.6px;font-weight:bold;color:#264570;letter-spacing:0">マテリアル</div>
<div class="a" style="left:953px;top:305.2px;width:28px;height:28px;background:#f0f0f5;box-shadow:0 1px 2px rgba(0,0,0,0.2)"></div>
<svg class="a" style="left:959px;top:311.2px" width="16" height="16" viewBox="0 0 16 16"><g fill="none" stroke="#1f3d6b" stroke-width="1.1"><path d="M2 6l3-3.5L8 6v7.5H2z"/><path d="M8 6.5h6v7H8"/><path d="M11 6.5V4"/></g></svg>
<div class="a" style="left:901.5px;top:312.1px;width:40.5px;height:14.5px;background:#f3f3f7;border-radius:5px;box-shadow:0 1px 1.5px rgba(0,0,0,0.18)"></div>
<div class="t" style="left:901.5px;top:314.9px;width:40.5px;text-align:center;font-size:8.6px;font-weight:bold;color:#264570;letter-spacing:0">スタイル</div>
<div class="a" style="left:953px;top:339.1px;width:28px;height:28px;background:#f0f0f5;box-shadow:0 1px 2px rgba(0,0,0,0.2)"></div>
<svg class="a" style="left:959px;top:345.1px" width="16" height="16" viewBox="0 0 16 16"><path d="M9 2l5 5-6.5 6.5L2.5 8.5 2 3.5z" fill="none" stroke="#1f3d6b" stroke-width="1.1" stroke-linejoin="round" transform="rotate(0 8 8)"/><circle cx="4.8" cy="11" r="0.9" fill="none" stroke="#1f3d6b" stroke-width="0.8"/></svg>
<div class="a" style="left:918.0px;top:345.9px;width:24.0px;height:14.5px;background:#f3f3f7;border-radius:5px;box-shadow:0 1px 1.5px rgba(0,0,0,0.18)"></div>
<div class="t" style="left:918.0px;top:348.7px;width:24.0px;text-align:center;font-size:8.6px;font-weight:bold;color:#264570;letter-spacing:0">タグ</div>
<div class="a" style="left:953px;top:373.0px;width:28px;height:28px;background:#f0f0f5;box-shadow:0 1px 2px rgba(0,0,0,0.2)"></div>
<svg class="a" style="left:959px;top:379.0px" width="16" height="16" viewBox="0 0 16 16"><path d="M3 4.5L9.5 2l3.5 6-6.5 3z" fill="none" stroke="#1f3d6b" stroke-width="1.1"/><path d="M6.5 11l6.5-3 1 3-6 2.5z" fill="#1f3d6b"/></svg>
<div class="a" style="left:926.0px;top:379.8px;width:16.0px;height:14.5px;background:#f3f3f7;border-radius:5px;box-shadow:0 1px 1.5px rgba(0,0,0,0.18)"></div>
<div class="t" style="left:926.0px;top:382.6px;width:16.0px;text-align:center;font-size:8.6px;font-weight:bold;color:#264570;letter-spacing:0">影</div>
<div class="a" style="left:953px;top:406.8px;width:28px;height:28px;background:#f0f0f5;box-shadow:0 1px 2px rgba(0,0,0,0.2)"></div>
<svg class="a" style="left:959px;top:412.8px" width="16" height="16" viewBox="0 0 16 16"><g fill="none" stroke="#1f3d6b" stroke-width="1.1"><rect x="2" y="6" width="12" height="8"/><path d="M1.5 5.5l11.5-3 .5 2.2L2 7.7z"/><path d="M7 8.5v3.5l3-1.7z"/></g></svg>
<div class="a" style="left:910.7px;top:413.6px;width:31.3px;height:14.5px;background:#f3f3f7;border-radius:5px;box-shadow:0 1px 1.5px rgba(0,0,0,0.18)"></div>
<div class="t" style="left:910.7px;top:416.4px;width:31.3px;text-align:center;font-size:8.6px;font-weight:bold;color:#264570;letter-spacing:0">シーン</div>
<div class="a" style="left:953px;top:440.7px;width:28px;height:28px;background:#f0f0f5;box-shadow:0 1px 2px rgba(0,0,0,0.2)"></div>
<svg class="a" style="left:959px;top:446.7px" width="16" height="16" viewBox="0 0 16 16"><g fill="none" stroke="#1f3d6b" stroke-width="1.05"><circle cx="4.6" cy="9" r="2.9"/><circle cx="11.4" cy="9" r="2.9"/><path d="M7.3 8.2Q8 7.2 8.7 8.2M1.8 8L1.2 6.8M14.2 8l.6-1.2"/></g></svg>
<div class="a" style="left:918.6px;top:447.5px;width:23.4px;height:14.5px;background:#f3f3f7;border-radius:5px;box-shadow:0 1px 1.5px rgba(0,0,0,0.18)"></div>
<div class="t" style="left:918.6px;top:450.3px;width:23.4px;text-align:center;font-size:8.6px;font-weight:bold;color:#264570;letter-spacing:0">表示</div>
<div class="a" style="left:953px;top:474.5px;width:28px;height:28px;background:#f0f0f5;box-shadow:0 1px 2px rgba(0,0,0,0.2)"></div>
<svg class="a" style="left:959px;top:480.5px" width="16" height="16" viewBox="0 0 16 16"><circle cx="8" cy="8" r="6" fill="none" stroke="#1f3d6b" stroke-width="1.1"/><path d="M8 2v12M8 5h5.4M8 8h6M8 11h5.4M10.5 2.5v11" fill="none" stroke="#1f3d6b" stroke-width="0.9"/></svg>
<div class="a" style="left:832.0px;top:481.3px;width:110.0px;height:14.5px;background:#f3f3f7;border-radius:5px;box-shadow:0 1px 1.5px rgba(0,0,0,0.18)"></div>
<div class="t" style="left:832.0px;top:484.1px;width:110.0px;text-align:center;font-size:8.6px;font-weight:bold;color:#264570;letter-spacing:-0.45px">ソフトニング/スムージング</div>
<div class="a" style="left:953px;top:508.4px;width:28px;height:28px;background:#f0f0f5;box-shadow:0 1px 2px rgba(0,0,0,0.2)"></div>
<svg class="a" style="left:959px;top:514.4px" width="16" height="16" viewBox="0 0 16 16"><circle cx="8" cy="8" r="6.3" fill="none" stroke="#1f3d6b" stroke-width="1.1"/><circle cx="8" cy="4.8" r="0.8" fill="#1f3d6b"/><path d="M8 6.8v5" stroke="#1f3d6b" stroke-width="1.3"/></svg>
<div class="a" style="left:893.6px;top:515.1px;width:48.4px;height:14.5px;background:#f3f3f7;border-radius:5px;box-shadow:0 1px 1.5px rgba(0,0,0,0.18)"></div>
<div class="t" style="left:893.6px;top:518.0px;width:48.4px;text-align:center;font-size:8.6px;font-weight:bold;color:#264570;letter-spacing:0">モデル情報</div>
<!-- upgrade -->
<div class="a" style="left:867px;top:552.5px;width:117px;height:19.5px;background:rgba(98,99,98,0.97)"></div>
<div class="t" style="left:883px;top:558px;font-size:8.5px;color:#f2f2f2;letter-spacing:-0.3px">今すぐアップグレード</div>
<svg class="a" style="left:0;top:0" width="1024" height="643" style="pointer-events:none"><path d="M950.5 552.5L952.5 572" stroke="#222" stroke-width="1" stroke-dasharray="3 2.5"/></svg>
<!-- status bar -->

<svg class="a" style="left:41px;top:576px" width="17" height="17" viewBox="0 0 17 17"><circle cx="8.5" cy="8.5" r="7.3" fill="none" stroke="#333" stroke-width="1.2"/><path d="M6.2 6.5a2.3 2.3 0 1 1 3.2 2.1c-.7.3-.9.8-.9 1.5" fill="none" stroke="#333" stroke-width="1.3"/><circle cx="8.5" cy="12.3" r="0.9" fill="#333"/></svg>
<svg class="a" style="left:64px;top:576px" width="17" height="17" viewBox="0 0 17 17"><g fill="none" stroke="#333" stroke-width="0.9"><circle cx="8.5" cy="8.5" r="7"/><ellipse cx="8.5" cy="8.5" rx="3.2" ry="7"/><path d="M1.5 8.5h14M2.6 5h11.8M2.6 12h11.8"/></g></svg>
<svg class="a" style="left:89px;top:576px" width="14" height="18" viewBox="0 0 14 18"><rect x="1.5" y="1" width="10.5" height="16" rx="5.2" fill="none" stroke="#333" stroke-width="1.1"/><path d="M1.8 6.5h10M6.8 1v5.5" stroke="#4a6891" stroke-width="0.9"/></svg>
<div class="t" style="left:111.5px;top:580.5px;font-size:9.17px;color:#111">オブジェクトをクリックまたはドラッグ。 Shift = 追加/除外。 Option = 追加。 Shift + Option = 除外。</div>
<div class="t" style="left:848.5px;top:579.5px;font-size:8.5px;color:#333">測定</div>
<div class="a" style="left:868.5px;top:576.5px;width:101px;height:15.5px;background:#fff;border:1.3px solid #a9a9a9;border-radius:3px"></div>
<svg class="a" style="left:972px;top:577px" width="14" height="15" viewBox="0 0 24 26"><path d="M10.3 0.6Q11.5 0 12.7 0.6L22.6 5.6Q23.3 6 23.3 6.8V19.2Q23.3 20 22.6 20.4L12.7 25.4Q11.5 26 10.3 25.4L1.4 20.6Q0.8 20.2 0.8 19.4V7.2Q0.8 6.4 1.4 6z" fill="#1c5fa8"/><g fill="none" stroke="#d3deeb" stroke-width="1.8" stroke-linecap="butt"><path d="M0.6 6.8L11.5 12.4V25.5"/><path d="M1.4 15.5L8.3 18.8"/><path d="M7.3 5.9Q12 3 19.5 7.8V16.2L15.7 19.4"/><path d="M12 8.7L15.3 10.3V13.8"/></g><path d="M0 13.4Q4.5 12.6 8.8 14.8" fill="none" stroke="#f1f1f6" stroke-width="1.6"/></svg>

</body></html>
